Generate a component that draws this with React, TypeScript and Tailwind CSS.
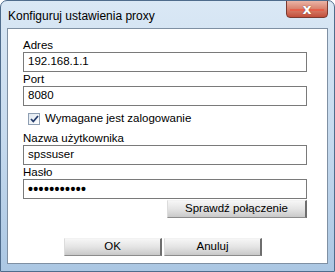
import { ReactNode } from 'react'

const Field = ({ value, dots }: { value: string; dots?: boolean }) => (
  <div
    className={`h-[20px] border border-[#7a7a7a] bg-white pl-[4px] flex items-center text-black ${
      dots ? 'tracking-[0.4px] text-[14px] font-bold' : 'text-[11.5px]'
    }`}
  >
    {value}
  </div>
)

const Label = ({ children }: { children: ReactNode }) => (
  <p className="h-[14px] leading-[14px] text-[11.5px] text-black">{children}</p>
)

const Button = ({ children, className }: { children: ReactNode; className?: string }) => (
  <button
    className={`h-[18px] flex items-center justify-center text-[11.5px] leading-none text-black bg-gradient-to-b from-[#f6f6f6] via-[#e4e4e4] to-[#c9c9c9] border-t border-l border-t-[#f2f2f2] border-l-[#dcdcdc] border-r-2 border-b border-r-[#6e6e6e] border-b-[#8c8c8c] ${className ?? ''}`}
  >
    {children}
  </button>
)

export default function App() {
  return (
    <div className="w-[335px] h-[272px] flex flex-col rounded-t-[7px] border border-[#4f6c8c] bg-gradient-to-b from-[#dae8f5] via-[#c6daee] to-[#abc7e3] font-['Liberation_Sans',sans-serif] overflow-hidden">
      <div className="h-[27px] flex items-start justify-between pl-[7px] pr-[6px] shrink-0">
        <span className="mt-[7px] text-[12px] leading-[16px] text-black">
          Konfiguruj ustawienia proxy
        </span>
        <div className="relative w-[42px] h-[18px] -mt-px rounded-b-[4px] border border-[#7a3a30] bg-gradient-to-b from-[#eab4a6] via-[#d8816d] to-[#c24e3a] flex items-center justify-center">
          <div className="absolute left-[3px] right-[3px] top-[8px] h-[2px] bg-[#e9563e] opacity-70" />
          <span className="relative text-white font-bold text-[14px] leading-none font-['DejaVu_Sans',sans-serif] [text-shadow:0_0_1px_#5a1c12]">
            x
          </span>
        </div>
      </div>
      <div className="flex-1 mx-[6px] mb-[7px] bg-white border border-[#7f90a3] pt-[9px] pl-[15px] pr-[20px] flex flex-col">
        <Label>Adres</Label>
        <Field value="192.168.1.1" />
        <Label>Port</Label>
        <Field value="8080" />
        <label className="mt-[6px] ml-[5px] h-[13px] flex items-center gap-[5px] text-[11.5px] text-black">
          <span className="w-[12px] h-[12px] border border-[#8f9fb3] bg-gradient-to-br from-[#dfe7ef] to-[#ffffff] flex items-center justify-center">
            <svg width="9" height="8" viewBox="0 0 9 8">
              <path d="M1 4 L3.3 6.5 L8 1" stroke="#253c6b" strokeWidth="1.8" fill="none" />
            </svg>
          </span>
          Wymagane jest zalogowanie
        </label>
        <div className="mt-[6px]">
          <Label>Nazwa użytkownika</Label>
        </div>
        <Field value="spssuser" />
        <Label>Hasło</Label>
        <Field value="•••••••••••" dots />
        <div className="mt-px flex justify-end">
          <Button className="w-[140px]">Sprawdź połączenie</Button>
        </div>
        <div className="mt-[20px] flex justify-center gap-[2px] pr-[4px]">
          <Button className="w-[98px]">OK</Button>
          <Button className="w-[98px]">Anuluj</Button>
        </div>
      </div>
    </div>
  )
}
